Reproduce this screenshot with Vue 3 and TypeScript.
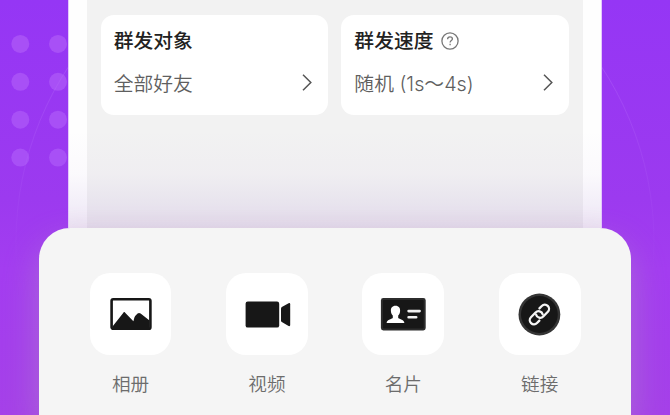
<script setup lang="ts">
interface Setting {
  title: string
  value: string
  help?: boolean
}

interface Action {
  kind: 'album' | 'video' | 'card' | 'link'
  label: string
}

const settings: Setting[] = [
  { title: '群发对象', value: '全部好友' },
  { title: '群发速度', value: '随机 (1s～4s)', help: true },
]

const actions: Action[] = [
  { kind: 'album', label: '相册' },
  { kind: 'video', label: '视频' },
  { kind: 'card', label: '名片' },
  { kind: 'link', label: '链接' },
]
</script>

<template>
  <main class="stage">
    <svg class="backdrop" viewBox="0 0 670 415" aria-hidden="true">
      <defs>
        <linearGradient id="arc-fade" x1="0" y1="66" x2="0" y2="280" gradientUnits="userSpaceOnUse">
          <stop offset="0" stop-color="#b66cf8" stop-opacity="0.36" />
          <stop offset="1" stop-color="#b66cf8" stop-opacity="0" />
        </linearGradient>
      </defs>
      <g fill="#a850f6">
        <template v-for="row in 4" :key="row">
          <circle cx="20.3" :cy="6 + row * 37.9" r="9" />
          <circle cx="58" :cy="6 + row * 37.9" r="9" />
        </template>
      </g>
      <circle cx="335" cy="242" r="319" fill="none" stroke="url(#arc-fade)" stroke-width="1" />
    </svg>

    <section class="phone">
      <div class="screen">
        <article v-for="item in settings" :key="item.title" class="setting">
          <h2 class="title">
            <span class="text">{{ item.title }}</span>
            <svg v-if="item.help" class="help" viewBox="0 0 18 18" fill="none" stroke="#777" stroke-width="1.3">
              <circle cx="9" cy="9" r="8.1" />
              <path d="M6.6 7.2C6.6 5.7 7.6 4.8 9 4.8s2.4.9 2.4 2.1c0 1.5-2.3 1.8-2.3 3.6" />
              <path d="M9.1 11.8v1.5" />
            </svg>
          </h2>
          <div class="row">
            <span class="text value">{{ item.value }}</span>
            <svg class="chevron" viewBox="0 0 10 17" fill="none" stroke="#555" stroke-width="1.5">
              <path d="M1 .8 8.8 8.5 1 16.2" />
            </svg>
          </div>
        </article>
      </div>
    </section>

    <section class="sheet">
      <div v-for="action in actions" :key="action.kind" class="action">
        <div class="tile">
          <svg v-if="action.kind === 'album'" class="icon" viewBox="0 0 48 48">
            <rect x="4.6" y="9.2" width="38.8" height="29.6" rx="1.6" fill="#fff" stroke="#171717" stroke-width="2.6" />
            <path d="M5.5 36.5 16 23.2Q17.2 21.2 18.4 22.9L26.4 31.2 27.4 27.4Q28 26 30.6 23.6 32 22.2 33.6 23.6L42.5 30.6V38H5.5z" fill="#171717" />
          </svg>
          <svg v-else-if="action.kind === 'video'" class="icon" viewBox="-0.6 -0.4 48 48" fill="#171717">
            <rect x="2" y="11.2" width="33.6" height="26" rx="2.2" />
            <path d="M37.4 18.2Q37.4 17.2 38.2 16.6L45 12.8Q46.6 12.2 46.6 13.8V34.6Q46.6 36.2 45 35.6L38.2 31.6Q37.4 31 37.4 30z" />
          </svg>
          <svg v-else-if="action.kind === 'card'" class="icon" viewBox="0 -0.3 48 48">
            <rect x="1.9" y="7.8" width="44.8" height="32.4" rx="2.4" fill="#2c2c2c" />
            <rect x="3.9" y="9.8" width="40.8" height="28.4" rx="1" fill="#171717" />
            <path d="M16.5 15.5c-3.3 0-4.8 2.3-4.6 5.1.1 2.2.9 3.7 1.9 4.7v2.2c0 1.1-6 1.6-6.2 5.1h17.8c-.2-3.5-6.2-4-6.2-5.1v-2.2c1-1 1.8-2.5 1.9-4.7.2-2.8-1.3-5.1-4.6-5.1z" fill="#fff" />
            <path d="M29.6 20.8h11M29.6 26.9h7.6" fill="none" stroke="#f1f1f1" stroke-width="2.6" stroke-linecap="round" />
          </svg>
          <svg v-else class="icon" viewBox="0.6 -0.5 48 48">
            <circle cx="24" cy="24" r="20.9" fill="#353535" />
            <circle cx="24" cy="24" r="18.4" fill="#171717" />
            <g transform="translate(24 24) rotate(-46)" fill="none" stroke="#f5f5f5" stroke-width="2.3" stroke-linecap="round">
              <path d="M-4.4 4.2H-7.8A4.2 4.2 0 0 1-7.8-4.2H-1.2A4.2 4.2 0 0 1 2.4 2.2" />
              <path d="M4.4-4.2H7.8A4.2 4.2 0 0 1 7.8 4.2H1.2A4.2 4.2 0 0 1-2.4-2.2" />
            </g>
          </svg>
        </div>
        <span class="label">{{ action.label }}</span>
      </div>
    </section>
  </main>
</template>

<style>
body {
  margin: 0;
}
</style>

<style scoped>
.stage {
  display: grid;
  grid-template-rows: 228px 187px;
  justify-items: center;
  position: relative;
  width: 670px;
  height: 415px;
  overflow: hidden;
  background: linear-gradient(#9536f5, #9c3aef 48%, #a33df0 65%, #a541e8);
  font-family: Inter, 'Noto Sans CJK SC', sans-serif;
}

.backdrop {
  position: absolute;
  inset: 0;
  width: 670px;
  height: 415px;
}

.phone {
  position: relative;
  box-sizing: border-box;
  width: 534px;
  padding: 0 18px;
  border: solid #e4c8fd;
  border-width: 0 1px;
  background: #fefefe;
}

.phone::after {
  content: '';
  position: absolute;
  inset: 130px 0 0;
  background: linear-gradient(rgba(155, 105, 195, 0), rgba(155, 110, 210, 0.03) 45%, rgba(145, 105, 200, 0.11) 78%, rgba(155, 100, 195, 0.18));
}

.screen {
  box-sizing: border-box;
  display: grid;
  grid-template-columns: 1fr 1fr;
  gap: 13px;
  align-items: start;
  height: 100%;
  padding: 15px 14px 0 13.7px;
  background: #f2f2f2;
}

.setting {
  box-sizing: border-box;
  height: 99.5px;
  padding: 11px 16.5px 0 13px;
  border-radius: 13px;
  background: #fff;
}

.title {
  display: flex;
  align-items: center;
  gap: 7.5px;
  height: 29px;
  margin: 0;
  color: #222;
  font-size: 19.8px;
  font-weight: 500;
  line-height: 29px;
}

.text {
  padding-top: 2px;
}

.value {
  padding-top: 4px;
}

.help {
  width: 18px;
  height: 18px;
}

.row {
  display: flex;
  align-items: center;
  justify-content: space-between;
  height: 29px;
  margin-top: 13px;
  color: #5f5f5f;
  font-size: 19.8px;
  font-weight: 350;
  line-height: 29px;
  white-space: nowrap;
}

.chevron {
  width: 10px;
  height: 17px;
}

.sheet {
  position: relative;
  box-sizing: border-box;
  display: flex;
  justify-content: space-between;
  width: 592px;
  padding: 45.4px 50.5px 0 50.7px;
  border-radius: 31px 31px 0 0;
  background: #f5f5f5;
  box-shadow: 0 16px 34px rgba(180, 150, 190, 0.48);
}

.action {
  display: flex;
  flex-direction: column;
  align-items: center;
  width: 81.7px;
}

.tile {
  display: grid;
  place-items: center;
  width: 81.7px;
  height: 82px;
  border-radius: 20px;
  background: #fff;
}

.icon {
  width: 48px;
  height: 48px;
}

.label {
  margin-top: 14.6px;
  color: #6c6c6c;
  font-size: 18.6px;
  font-weight: 350;
  line-height: 28px;
}
</style>
